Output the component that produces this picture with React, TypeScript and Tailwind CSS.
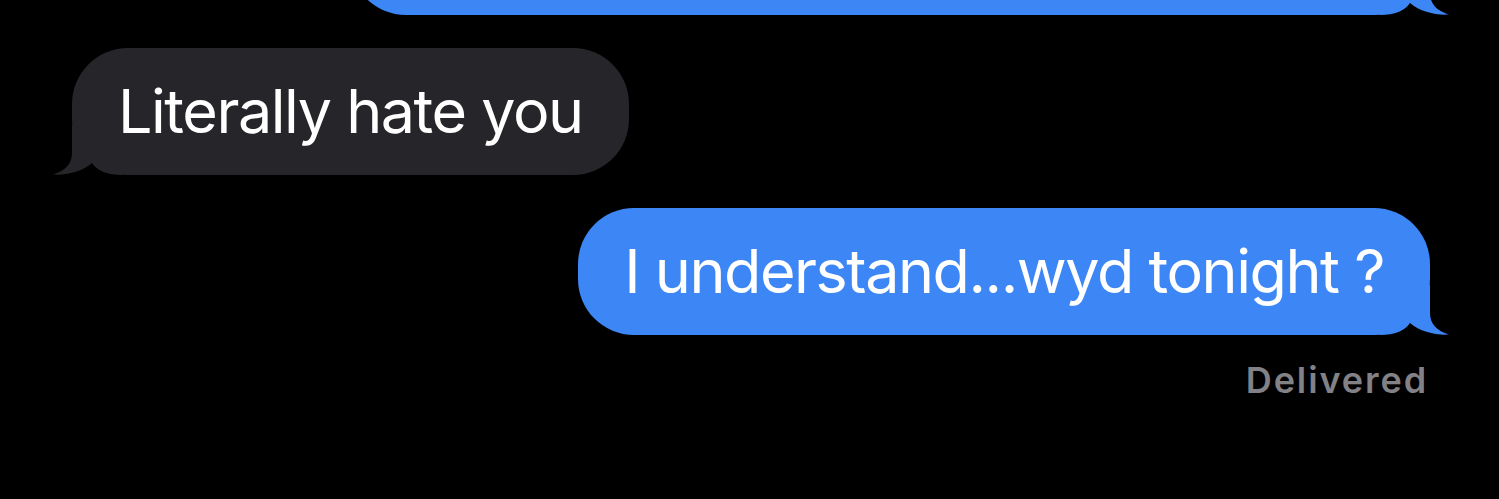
import React from "react";

const BLUE = "#3d86f6";
const GRAY = "#262529";

function Tail({ color, side }: { color: string; side: "left" | "right" }) {
  // Curled iMessage tail hugging the bottom corner of a bubble
  return (
    <svg
      width="70"
      height="50"
      viewBox="0 0 70 50"
      className={
        side === "right"
          ? "absolute bottom-0 right-[-20px]"
          : "absolute bottom-0 left-[-20px] scale-x-[-1]"
      }
    >
      <path
        d="M50 0 L50 28 C50 39 57 46 69 49.5 C57 50.5 40 47 30 38 Q22 50 0 50 L0 0 Z"
        fill={color}
      />
    </svg>
  );
}

function Bubble({
  text,
  color,
  side,
}: {
  text: string;
  color: string;
  side: "left" | "right";
}) {
  return (
    <div
      className="relative flex h-[127px] items-center rounded-[56px] px-[46px]"
      style={{ backgroundColor: color }}
    >
      <span className="whitespace-nowrap text-[61px] leading-none tracking-[-1.45px] text-white">
        {text}
      </span>
      <Tail color={color} side={side} />
    </div>
  );
}

export default function App() {
  return (
    <div
      className="h-[499px] w-[1499px] overflow-hidden bg-black"
      style={{ fontFamily: "Inter, 'Noto Sans', sans-serif" }}
    >
      <div className="flex flex-col">
        <div className="flex justify-end pr-[69px]">
          <div
            className="relative mt-[-112px] h-[127px] w-[1080px] rounded-[56px]"
            style={{ backgroundColor: BLUE }}
          >
            <Tail color={BLUE} side="right" />
          </div>
        </div>

        <div className="mt-[33px] flex pl-[72px]">
          <Bubble text="Literally hate you" color={GRAY} side="left" />
        </div>

        <div className="mt-[33px] flex justify-end pr-[69px]">
          <Bubble text="I understand...wyd tonight ?" color={BLUE} side="right" />
        </div>

        <div className="mt-[27px] flex justify-end pr-[71px]">
          <span className="text-[36px] font-semibold leading-none tracking-[1.9px] text-[#818186]">
            Delivered
          </span>
        </div>
      </div>
    </div>
  );
}
